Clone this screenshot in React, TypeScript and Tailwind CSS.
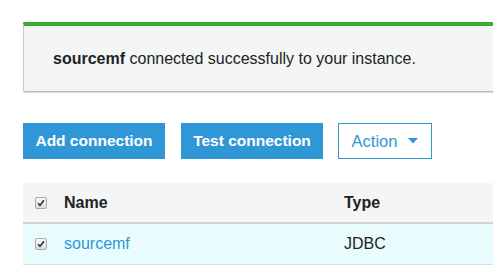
export default function App() {
    return (
        <div className="h-[279px] w-[493px] overflow-hidden bg-white pl-[23px] pt-[22px] font-['Liberation_Sans',Arial,sans-serif]">
            <div className="w-[490px] rounded-b-[3px] border-t-4 border-l border-b border-t-[#3ba935] border-l-[#c9cbcb] border-b-[#b9bbbb] bg-[#f4f5f5] pl-[29px] pt-[22px] pb-[22px] shadow-[0_1px_1px_rgba(0,0,0,0.15)]">
                <p className="text-[16px] leading-[21px] text-[#222]">
                    <span className="font-bold">sourcemf</span> connected successfully to your instance.
                </p>
            </div>

            <div className="mt-[31px] flex items-center gap-4">
                <button className="h-[36px] w-[142px] bg-[#2f97d6] text-[15.5px] font-bold text-white">
                    Add connection
                </button>
                <button className="h-[36px] w-[142px] bg-[#2f97d6] text-[15.5px] font-bold text-white">
                    Test connection
                </button>
                <button className="ml-[-1px] flex h-[36px] w-[94px] items-center justify-center gap-[11px] border border-[#2f97d6] bg-white text-[16.5px] text-[#2f97d6]">
                    Action
                    <svg width="10" height="6" viewBox="0 0 10 6" aria-hidden="true">
                        <path d="M0 0h10L5 5.5z" fill="#2f97d6" />
                    </svg>
                </button>
            </div>

            <table className="mt-[24px] w-[480px] border-collapse text-left">
                <thead>
                    <tr className="h-[40px] border-b-2 border-[#d4d4d4] bg-[#f5f5f5]">
                        <th className="w-[41px] pl-[12px]">
                            <Check />
                        </th>
                        <th className="w-[280px] text-[16px] font-bold text-[#222]">Name</th>
                        <th className="text-[16px] font-bold text-[#222]">Type</th>
                    </tr>
                </thead>
                <tbody>
                    <tr className="h-[41px] border-b border-[#dedede] bg-[#e9fcfd]">
                        <td className="pl-[12px]">
                            <Check />
                        </td>
                        <td className="text-[16px] text-[#2b98d8]">sourcemf</td>
                        <td className="text-[16px] text-[#222]">JDBC</td>
                    </tr>
                </tbody>
            </table>
        </div>
    );
}

function Check() {
    return (
        <span className="flex h-[12px] w-[12px] items-center justify-center rounded-[2px] border border-[#a9a9a9] bg-gradient-to-b from-[#fafafa] to-[#dcdcdc]">
            <svg width="8" height="8" viewBox="0 0 8 8" aria-hidden="true">
                <path d="M1 4.2l2 2L7 1.2" fill="none" stroke="#333" strokeWidth="1.6" />
            </svg>
        </span>
    );
}
